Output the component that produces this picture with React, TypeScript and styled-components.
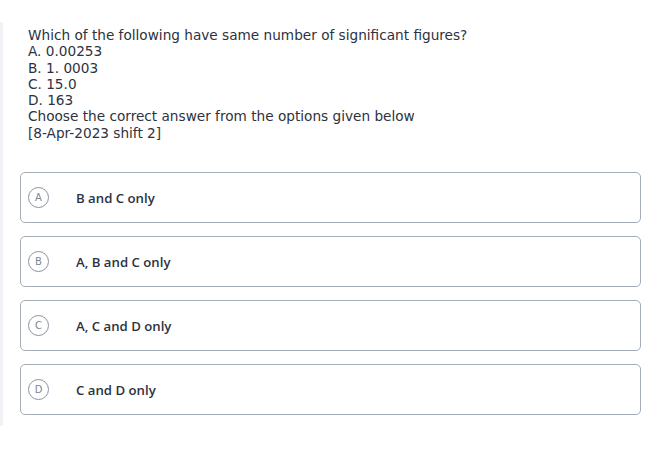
import React from "react";
import styled, { createGlobalStyle } from "styled-components";

const Global = createGlobalStyle`
  html, body { margin: 0; padding: 0; background: #ffffff; }
  body { font-family: "DejaVu Sans", "Noto Sans", sans-serif; color: #2d3240; }
`;

const Page = styled.div`
  padding-top: 22px;
`;

const Panel = styled.div`
  border-left: 3px solid #f0f2f5;
  height: 404px;
  box-sizing: border-box;
  padding: 5px 9px 0 17px;
`;

const Question = styled.div`
  padding-left: 8px;
  font-size: 13.65px;
  line-height: 16.3px;
  color: #2d3240;
`;

const Options = styled.div`
  margin-top: 31px;
  display: flex;
  flex-direction: column;
  gap: 13px;
`;

const Card = styled.div`
  height: 51px;
  box-sizing: border-box;
  border: 1px solid #a4adb6;
  border-radius: 5px;
  display: flex;
  align-items: center;
  padding-left: 7px;
`;

const Circle = styled.div`
  width: 19px;
  height: 19px;
  border: 1px solid #8593a3;
  border-radius: 50%;
  display: flex;
  align-items: center;
  justify-content: center;
  font-size: 10px;
  color: #7c8794;
  flex: none;
`;

const Label = styled.div`
  margin-left: 27px;
  font-family: "Open Sans", "Noto Sans", sans-serif;
  font-size: 13.2px;
  font-weight: 600;
  color: #2d3240;
`;

const options = [
  ["A", "B and C only"],
  ["B", "A, B and C only"],
  ["C", "A, C and D only"],
  ["D", "C and D only"],
];

export default function App() {
  return (
    <Page>
      <Global />
      <Panel>
        <Question>
          <div>Which of the following have same number of significant figures?</div>
          <div>A. 0.00253</div>
          <div>B. 1. 0003</div>
          <div>C. 15.0</div>
          <div>D. 163</div>
          <div>Choose the correct answer from the options given below</div>
          <div>[8-Apr-2023 shift 2]</div>
        </Question>
        <Options>
          {options.map(([k, t]) => (
            <Card key={k}>
              <Circle>{k}</Circle>
              <Label>{t}</Label>
            </Card>
          ))}
        </Options>
      </Panel>
    </Page>
  );
}
